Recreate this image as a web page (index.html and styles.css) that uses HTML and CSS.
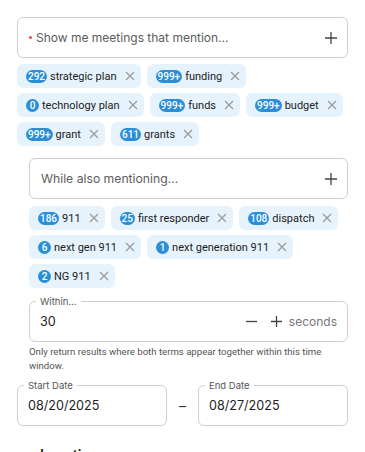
FILE: index.html
```html
<!DOCTYPE html>
<html lang="en">
<head>
    <meta charset="UTF-8">
    <meta name="viewport" content="width=device-width, initial-scale=1.0">
    <title>Meeting Search</title>
    <link rel="stylesheet" href="styles.css">
</head>
<body>
    <div class="panel">
        <div class="term-input">
            <span class="required-dot"></span>
            <span class="placeholder">Show me meetings that mention...</span>
            <svg class="add-icon" width="14" height="14" viewBox="0 0 14 14"><path d="M7 1v12M1 7h12" stroke="#444" stroke-width="1.3" fill="none"/></svg>
        </div>

        <div class="chips">
            <div class="chip"><span class="badge">292</span><span class="chip-label">strategic plan</span><svg class="chip-close" width="10" height="10" viewBox="0 0 10 10"><path d="M1 1l8 8M9 1l-8 8" stroke="#9a9a9a" stroke-width="1.2"/></svg></div>
            <div class="chip"><span class="badge">999+</span><span class="chip-label">funding</span><svg class="chip-close" width="10" height="10" viewBox="0 0 10 10"><path d="M1 1l8 8M9 1l-8 8" stroke="#9a9a9a" stroke-width="1.2"/></svg></div>
            <div class="chip"><span class="badge">0</span><span class="chip-label">technology plan</span><svg class="chip-close" width="10" height="10" viewBox="0 0 10 10"><path d="M1 1l8 8M9 1l-8 8" stroke="#9a9a9a" stroke-width="1.2"/></svg></div>
            <div class="chip"><span class="badge">999+</span><span class="chip-label">funds</span><svg class="chip-close" width="10" height="10" viewBox="0 0 10 10"><path d="M1 1l8 8M9 1l-8 8" stroke="#9a9a9a" stroke-width="1.2"/></svg></div>
            <div class="chip"><span class="badge">999+</span><span class="chip-label">budget</span><svg class="chip-close" width="10" height="10" viewBox="0 0 10 10"><path d="M1 1l8 8M9 1l-8 8" stroke="#9a9a9a" stroke-width="1.2"/></svg></div>
            <div class="chip"><span class="badge">999+</span><span class="chip-label">grant</span><svg class="chip-close" width="10" height="10" viewBox="0 0 10 10"><path d="M1 1l8 8M9 1l-8 8" stroke="#9a9a9a" stroke-width="1.2"/></svg></div>
            <div class="chip"><span class="badge">611</span><span class="chip-label">grants</span><svg class="chip-close" width="10" height="10" viewBox="0 0 10 10"><path d="M1 1l8 8M9 1l-8 8" stroke="#9a9a9a" stroke-width="1.2"/></svg></div>
        </div>

        <div class="nested">
            <div class="term-input">
                <span class="placeholder">While also mentioning...</span>
                <svg class="add-icon" width="14" height="14" viewBox="0 0 14 14"><path d="M7 1v12M1 7h12" stroke="#444" stroke-width="1.3" fill="none"/></svg>
            </div>

            <div class="chips">
                <div class="chip"><span class="badge">186</span><span class="chip-label">911</span><svg class="chip-close" width="10" height="10" viewBox="0 0 10 10"><path d="M1 1l8 8M9 1l-8 8" stroke="#9a9a9a" stroke-width="1.2"/></svg></div>
                <div class="chip"><span class="badge">25</span><span class="chip-label">first responder</span><svg class="chip-close" width="10" height="10" viewBox="0 0 10 10"><path d="M1 1l8 8M9 1l-8 8" stroke="#9a9a9a" stroke-width="1.2"/></svg></div>
                <div class="chip"><span class="badge">108</span><span class="chip-label">dispatch</span><svg class="chip-close" width="10" height="10" viewBox="0 0 10 10"><path d="M1 1l8 8M9 1l-8 8" stroke="#9a9a9a" stroke-width="1.2"/></svg></div>
                <div class="chip"><span class="badge">6</span><span class="chip-label">next gen 911</span><svg class="chip-close" width="10" height="10" viewBox="0 0 10 10"><path d="M1 1l8 8M9 1l-8 8" stroke="#9a9a9a" stroke-width="1.2"/></svg></div>
                <div class="chip"><span class="badge">1</span><span class="chip-label">next generation 911</span><svg class="chip-close" width="10" height="10" viewBox="0 0 10 10"><path d="M1 1l8 8M9 1l-8 8" stroke="#9a9a9a" stroke-width="1.2"/></svg></div>
                <div class="chip"><span class="badge">2</span><span class="chip-label">NG 911</span><svg class="chip-close" width="10" height="10" viewBox="0 0 10 10"><path d="M1 1l8 8M9 1l-8 8" stroke="#9a9a9a" stroke-width="1.2"/></svg></div>
            </div>

            <div class="field within">
                <span class="field-label">Within...</span>
                <span class="field-value">30</span>
                <svg class="step-icon" width="13" height="13" viewBox="0 0 14 14"><path d="M1 7h12" stroke="#444" stroke-width="1.4" fill="none"/></svg>
                <svg class="step-icon plus" width="13" height="13" viewBox="0 0 14 14"><path d="M7 1v12M1 7h12" stroke="#444" stroke-width="1.4" fill="none"/></svg>
                <span class="unit">seconds</span>
            </div>
            <p class="helper">Only return results where both terms appear together within this time window.</p>
        </div>

        <div class="dates">
            <div class="field">
                <span class="field-label">Start Date</span>
                <span class="field-value">08/20/2025</span>
            </div>
            <span class="dash">&ndash;</span>
            <div class="field">
                <span class="field-label">End Date</span>
                <span class="field-value">08/27/2025</span>
            </div>
        </div>

        <div class="section-head">
            <svg width="10" height="10" viewBox="0 0 10 10"><path d="M2 6.5L5 3.5L8 6.5" stroke="#333" stroke-width="1.4" fill="none"/></svg>
            <span>Location</span>
        </div>
    </div>
</body>
</html>
```

FILE: styles.css
```css
* {
    box-sizing: border-box;
    margin: 0;
    padding: 0;
}

body {
    background: #fff;
    color: #222;
    font-family: Inter, 'Liberation Sans', sans-serif;
    overflow: hidden;
}

.panel {
    padding: 17px 17px 0 17px;
}

.term-input {
    display: flex;
    align-items: center;
    height: 41px;
    padding: 0 9px 0 11px;
    border: 1px solid #cfcfcf;
    border-radius: 6px;
}

.required-dot {
    width: 3px;
    height: 3px;
    border-radius: 50%;
    background: #e5484d;
    margin-right: 4px;
}

.placeholder {
    flex: 1;
    font-size: 12px;
    color: #5c5c5c;
}

.nested .placeholder {
    font-size: 12.2px;
}

.add-icon {
    flex-shrink: 0;
}

.chips {
    display: flex;
    flex-wrap: wrap;
    gap: 5px 6px;
    margin-top: 6px;
}

.chip {
    display: flex;
    align-items: center;
    height: 24px;
    padding: 0 6px 0 9px;
    background: #e6f3fc;
    border-radius: 6px;
    font-family: Roboto, 'Liberation Sans', sans-serif;
}

.badge {
    display: inline-flex;
    align-items: center;
    justify-content: center;
    min-width: 13px;
    height: 13px;
    padding: 0 2px;
    border-radius: 7px;
    background: #2b8fd8;
    color: #fff;
    font-size: 10px;
    font-weight: 500;
}

.chip-label {
    margin-left: 3px;
    font-size: 11px;
    color: #1c1c1c;
}

.chip-close {
    margin-left: 8px;
}

.nested {
    padding-left: 12px;
    margin-top: 12px;
}

.nested .chips {
    margin-top: 7px;
}

.field {
    position: relative;
    display: flex;
    align-items: center;
    height: 41px;
    padding: 0 10px;
    border: 1px solid #cfcfcf;
    border-radius: 6px;
}

.field-label {
    position: absolute;
    top: -6px;
    left: 6px;
    padding: 0 4px;
    background: #fff;
    font-size: 9.5px;
    line-height: 11px;
    color: #555;
}

.field-value {
    flex: 1;
    font-size: 12.6px;
    color: #222;
}

.within {
    margin-top: 13px;
}

.step-icon {
    margin-left: 12px;
}

.unit {
    margin-left: 6px;
    font-size: 12px;
    color: #777;
}

.helper {
    margin-top: 3px;
    font-family: Roboto, 'Liberation Sans', sans-serif;
    font-size: 9.6px;
    line-height: 14px;
    color: #555;
}

.dates {
    display: flex;
    align-items: center;
    margin-top: 12px;
}

.dates .field {
    flex: 1;
}

.dash {
    width: 31px;
    text-align: center;
    font-size: 14px;
    color: #333;
}

.section-head {
    display: flex;
    align-items: center;
    gap: 10px;
    margin-top: 20px;
    padding-left: 3px;
    font-size: 14px;
    font-weight: 600;
    color: #222;
}
```
